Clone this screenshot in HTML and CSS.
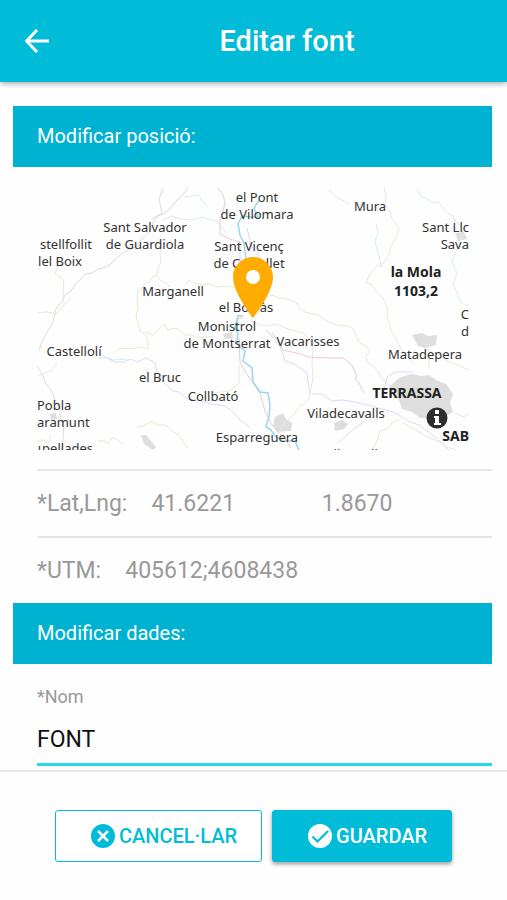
FILE: index.html
```
<!DOCTYPE html>
<html lang="ca">
<head>
  <meta charset="UTF-8">
  <meta name="viewport" content="width=device-width, initial-scale=1">
  <title>Editar font</title>
  <link rel="stylesheet" href="styles.css">
</head>
<body>
  <header class="toolbar">
    <button class="back" type="button" aria-label="Enrere">
      <svg viewBox="0 0 24 24" width="24" height="24"><path d="M12 1 1.500 12 12 23M1.500 12H24" fill="none" stroke="currentColor" stroke-width="3"/></svg>
    </button>
    <h1>Editar font</h1>
  </header>

  <main>
    <form id="editar">
      <h2>Modificar posició:</h2>

      <div class="map-row">
        <svg class="map" viewBox="0 0 432 262" role="img" aria-label="Mapa">
          <!-- zones urbanes -->
          <g fill="#dedede">
            <path d="M352 199l10-9 12-4 10 2 8-1 9 6 8 3 7 10-3 9 3 9-9 5-10 2-14-1-8-6-10-3-3-9z"/>
            <path d="M375 147l10-2 6 3 9-1-1 10-11 3-7-2z"/>
            <path d="M238 229l8-4 3 6 6 4-1 8-14 1-4-6z"/>
            <path d="M297 235l8-3 6 4-4 5-9 2z"/>
            <path d="M104 247l5 0 10 12-3 3-9-6z"/>
            <path d="M186 146l9-2 1 6-8 1zM418 45l9-1 3 7-9 2zM13 226l6-1 1 6-6 1z"/>
          </g>
          <!-- camins i carreteres locals -->
          <g fill="none" stroke="#eae8d6" stroke-width="1">
            <path d="M124 57l-1 10 1 8-3 5-1 7-5 2-3 5-4 1-3 5-4 2-1 10 1 8-2 7 2 9 3 8 5 3 2 5 0 9-8-2-8 2-7-1-7 1-5 5"/>
            <path d="M119 87l5 6 6 3 3 3M148 97l4-5 5 3 9 2 7-1 7 3 9-1 10 2 14 2"/>
            <path d="M108 144l8 3 7-7 4-4 4 6 6-2 5 2 6 5 6 0 7 3 8-1 9-1"/>
            <path d="M21 69l0 9-3 8 5 3 4 4-1 10 1 12M0 125l9-1 11 2 6-8 8-8"/>
            <path d="M347 0l2 9-1 7 5 8 2 7 7 9-3 10-5 8-2 9-6 9-7 3-6 7-4 9 5 1 4 6 8 8 4 9 1 12 3 12 5 8 5 10 14 16"/>
            <path d="M230 109l5-2 7 3 8 1 10 4 3 6 5 3 13 3 9 6 10 4 10 1 6 2 3 8 3 6 8 5 3 3-4 6 1 6 6 4 4 4 5 9 7 6"/>
            <path d="M213 132l7 4 10 2 9-2 12 5 15 4 6 6 4 8-1 18 1 12-2 12-3 12-8 5-7 9-9 9-6 9"/>
            <path d="M388 155l4 8 0 18M396 165l7 2 7 6 11 4 11 5M362 232l-6 2-6 7-7 2-3 10-5 9M365 234l8 5 6 3 11 7 13 5 7 5 9 3M418 225l8 4 6-3"/>
            <path d="M100 239l6-1 8-4 8 3 7 0 6 6 7 4 4 7 5 6M0 253l6-1 6 3 2-9M60 253l6 0 5 2 4-5 4 1 8 6"/>
            <path d="M176 205l8-1 8-1 10-8 0-18"/>
          </g>
          <g fill="none" stroke="#e0d8da" stroke-width="1">
            <path d="M151 0l-6 8-5 4-7 9-7 5-5 2-4 4-3 8-3 6-6 5-7 8-9 4-11 8-4 5-5 3-8 2-6 4-7 1-4 5-5 4-5 8-6 4-3 6-6 8-2 9-2 6-9 15-4 11"/>
            <path d="M126 0l-4 11 3 14-10 6"/>
            <path d="M0 178l5 8 4 10 6 7 3 9 5 8 0 9 4 8-2 25"/>
          </g>
          <!-- rieres -->
          <g fill="none" stroke="#dcecea" stroke-width="1">
            <path d="M380 0l4 9 5 1 6 5 5-1 4 3 5 7 7 4 2 5 8 7-1 7-2 6-3 8-5 12 2 6 3 6-4 12 4 7 3 9 11 7"/>
            <path d="M339 36l2 8-3 10 4 14 3 12M292 2l6 6 14 8M125 32l10-4 8 3 12 1 10-3 9 3 7 1 3 6 5 6"/>
            <path d="M147 9l14-2 9 12M0 188l14-5 6-8M64 167l12 5 14-1"/>
          </g>
          <!-- autovia -->
          <g fill="none" stroke="#d6dcf6" stroke-width="1">
            <path d="M62 170l8 0 8 4 8 0 8-3 6 3 9-4 9 5 2 9 5 6 2 5 9 8 6 1 9 7 13 2 11 3 13 2 8 6 6 7 10 8"/>
            <path d="M275 206l10 0 10 7 10-1 13 2 12 3 19 5 10 3 12 8 11 4 16 12 15 14"/>
            <path d="M346 206l4-17 8-5 18 0M328 233l-15 11-12 11"/>
            <path d="M210 40l4 18 7 8 5 12 8 17M229 141l7 9 7 8 5 15 11 4 11 8 1 9 2 13"/>
          </g>
          <!-- ferrocarril -->
          <g fill="none" stroke="#f0c9cb" stroke-width="1">
            <path d="M181 0l5 7 2 8-2 8-3 9 0 14 10 5 10 3 0 20M206 130l-6 1 1 5M202 150l1 24 6 11 14 20 5 18 7 14 14 15 5 8"/>
            <path d="M235 145l6 8 5 9 9 2 8 2 9 3 18 1 16 0 9 7 4 9 0 6 3 3 5 10"/>
          </g>
          <!-- Llobregat -->
          <g fill="none" stroke="#96d8ee" stroke-width="1.500">
            <path d="M222 12l-5 8 4 9-6 0-10-1-4 8 2 11 4 8 2 16-2 20-2 20M206 128l-5 0-3 11 3 7-1 7 2 5 6 5-2 10 9 7 1 14 7 10 8 1 2 12-1 11-3 11 5 3 4 6 8 5 12 0 4 9"/>
          </g>

          <g class="places">
            <text x="220" y="14">el Pont</text>
            <text x="220" y="31">de Vilomara</text>
            <text x="333" y="23">Mura</text>
            <text x="108" y="44">Sant Salvador</text>
            <text x="108" y="61">de Guardiola</text>
            <text class="end" x="55" y="61">stellfollit</text>
            <text class="end" x="45" y="78">lel Boix</text>
            <text x="212" y="63">Sant Vicenç</text>
            <text x="212" y="80">de Castellet</text>
            <text class="end" x="432" y="44">Sant Llc</text>
            <text class="end" x="432" y="61">Sava</text>
            <text x="136" y="108">Marganell</text>
            <text x="209" y="124">el Borràs</text>
            <text x="190" y="143">Monistrol</text>
            <text x="190" y="160">de Montserrat</text>
            <text x="271" y="158">Vacarisses</text>
            <text x="37" y="168">Castellolí</text>
            <text x="123" y="194">el Bruc</text>
            <text x="388" y="171">Matadepera</text>
            <text class="end" x="432" y="131">C</text>
            <text class="end" x="432" y="148">d</text>
            <text x="176" y="213">Collbató</text>
            <text class="start" x="0" y="222">Pobla</text>
            <text class="start" x="0" y="239">aramunt</text>
            <text class="end" x="56" y="265">ɩpellades</text>
            <text x="309" y="230">Viladecavalls</text>
            <text x="220" y="254">Esparreguera</text>
            <text x="314" y="271">Ullastrell</text>
            <text class="bold" x="379" y="89">la Mola</text>
            <text class="bold" x="379" y="108">1103,2</text>
            <text class="bold" x="370" y="210">TERRASSA</text>
            <text class="bold end" x="432" y="253">SAB</text>
          </g>

          <circle cx="216" cy="89" r="9" fill="#fff"/>
          <path fill="#ffab00" fill-rule="evenodd" d="M216 69c-11 0-20 9-20 20 0 16 20 41 20 41s20-25 20-41c0-11-9-20-20-20zm0 13a7 7 0 1 1 0 14 7 7 0 0 1 0-14z"/>
          <circle cx="400" cy="230" r="10.500" fill="#2d2d2d"/>
          <path fill="#fff" d="M398 222h4v4h-4zM397 228h5v7h2v2h-7v-2h1v-5h-1z"/>
        </svg>
      </div>

      <div class="item">
        <label for="lat">*Lat,Lng:</label>
        <input id="lat" type="text" value="41.6221">
        <input id="lng" type="text" value="1.8670" aria-label="Lng">
      </div>
      <div class="item">
        <label for="utm">*UTM:</label>
        <input id="utm" type="text" value="405612;4608438">
      </div>

      <h2>Modificar dades:</h2>

      <div class="field">
        <label for="nom">*Nom</label>
        <input id="nom" type="text" value="FONT">
      </div>
    </form>
  </main>

  <footer class="actions">
    <button class="btn cancel" type="button">
      <svg viewBox="0 0 24 24" width="24" height="24"><circle cx="12" cy="12" r="12" fill="currentColor"/><path d="M7 7l10 10M17 7 7 17" stroke="#fff" stroke-width="2.500"/></svg>
      CANCEL·LAR
    </button>
    <button class="btn save" type="submit" form="editar">
      <svg viewBox="0 0 24 24" width="24" height="24"><circle cx="12" cy="12" r="12" fill="currentColor"/><path d="M4.500 12.500l5 5L20 7" fill="none" stroke="#00bcd9" stroke-width="2.200"/></svg>
      GUARDAR
    </button>
  </footer>
</body>
</html>
```
FILE: styles.css
```
* {
  box-sizing: border-box;
}

body {
  margin: 0;
  height: 100vh;
  display: flex;
  flex-direction: column;
  font-family: Roboto, sans-serif;
  background: #fefefe;
}

button,
input {
  font-family: inherit;
}

.toolbar {
  display: flex;
  align-items: center;
  flex-shrink: 0;
  height: 82px;
  background: #00bcd9;
  color: white;
  box-shadow: 0 1px 6px rgba(0, 0, 0, 0.4);
}

.back {
  display: flex;
  padding: 20px 18px 20px 25px;
  border: none;
  background: none;
  color: white;
  cursor: pointer;
}

.toolbar h1 {
  flex: 1;
  margin: 0;
  font-size: 29px;
  font-weight: 500;
  text-align: center;
}

main {
  flex: 1;
  min-height: 0;
  overflow-y: auto;
  padding: 24px 15px 0 13px;
}

h2 {
  margin: 0;
  padding: 18px 24px 19px;
  background: #00b2d1;
  color: white;
  font-size: 20px;
  line-height: 24px;
  font-weight: 400;
}

.map-row {
  margin-left: 24px;
  padding: 21px 23px 19px 0;
}

.map {
  display: block;
  width: 100%;
  overflow: hidden;
}

.places text {
  font-family: "Noto Sans", sans-serif;
  font-size: 13px;
  fill: #333;
  text-anchor: middle;
}

.places .bold {
  font-size: 14px;
  font-weight: 700;
  fill: #222;
}

.places .start {
  text-anchor: start;
}

.places .end {
  text-anchor: end;
}

.item {
  display: flex;
  align-items: center;
  height: 67px;
  margin-left: 24px;
  border-top: 2px solid #e5e5e5;
  color: #999;
  font-size: 23px;
}

.item label {
  margin-right: 24px;
}

.item input {
  flex: 1;
  min-width: 0;
  padding: 0;
  border: none;
  background: none;
  color: #999;
  font-size: 23px;
}

.field {
  margin-left: 24px;
  padding-top: 21px;
}

.field label {
  display: block;
  color: #999;
  font-size: 18px;
  line-height: 24px;
}

.field input {
  display: block;
  width: 100%;
  height: 57px;
  padding: 6px 0 0;
  border: none;
  border-bottom: 3px solid #26daee;
  background: none;
  color: #111;
  font-size: 23px;
  outline: none;
}

.actions {
  display: flex;
  justify-content: center;
  flex-shrink: 0;
  gap: 10px;
  padding: 38px 0;
  border-top: 2px solid #e8e8e8;
  background: #fefefe;
}

.btn {
  display: flex;
  align-items: center;
  gap: 4px;
  height: 52px;
  padding: 0 24px 0 35px;
  border: 1px solid #00bcd9;
  border-radius: 3px;
  font-size: 20px;
  font-weight: 500;
  cursor: pointer;
}

.cancel {
  background: white;
  color: #00bcd9;
}

.save {
  background: #00bcd9;
  color: white;
  box-shadow: 0 2px 4px rgba(0, 0, 0, 0.4);
}
```
